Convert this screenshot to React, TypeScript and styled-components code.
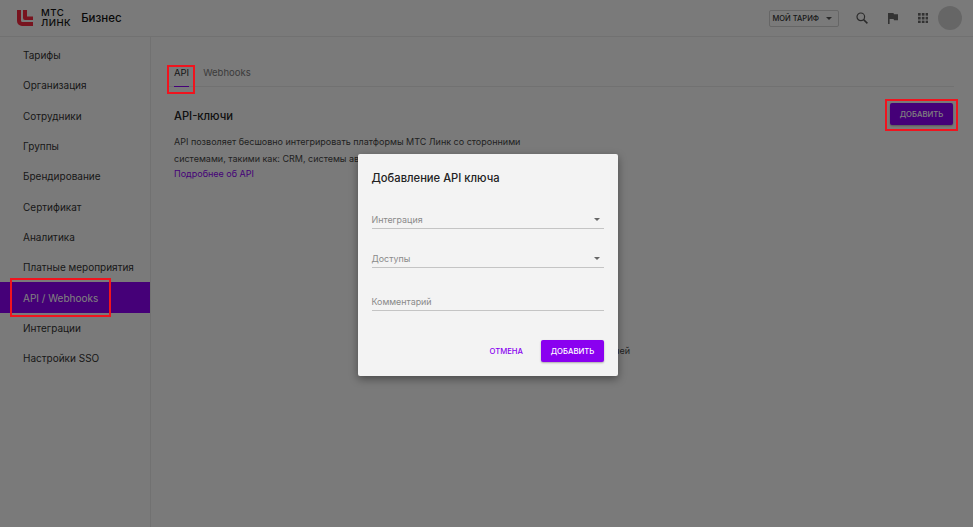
import React from "react";
import styled, { createGlobalStyle } from "styled-components";

const GlobalStyle = createGlobalStyle`
  html, body {
    margin: 0;
    padding: 0;
    background: #f5f5f5;
    font-family: Inter, "Noto Sans", sans-serif;
    color: #333;
  }
  * {
    box-sizing: border-box;
  }
`;

const Page = styled.div`
  position: relative;
  width: 973px;
  height: 527px;
  overflow: hidden;
  background: #f5f5f5;
`;

const Header = styled.header`
  height: 37px;
  display: flex;
  align-items: center;
  padding: 0 11px 0 17px;
  border-bottom: 1px solid #e2e2e2;
`;

const LogoText = styled.div`
  margin-left: 8px;
  font-size: 9.6px;
  line-height: 10px;
  letter-spacing: 0.5px;
  font-weight: 500;
  color: #111;
`;

const Brand = styled.div`
  margin-left: 10px;
  font-size: 11.5px;
  font-weight: 500;
  color: #111;
`;

const HeaderRight = styled.div`
  margin-left: auto;
  display: flex;
  align-items: center;
`;

const TariffButton = styled.div`
  width: 70px;
  height: 17px;
  display: flex;
  align-items: center;
  justify-content: space-between;
  padding: 0 6px 0 3px;
  border: 1px solid #ccc;
  border-radius: 2px;
  font-size: 7.5px;
  font-weight: 500;
  color: #333;
`;

const Caret = styled.span<{ $color?: string }>`
  width: 0;
  height: 0;
  border-left: 3px solid transparent;
  border-right: 3px solid transparent;
  border-top: 3px solid ${(p) => p.$color || "#555"};
`;

const IconSlot = styled.div<{ $left: number }>`
  margin-left: ${(p) => p.$left}px;
  display: flex;
  align-items: center;
`;

const Avatar = styled.div`
  width: 24px;
  height: 24px;
  margin-left: 10px;
  border-radius: 50%;
  background: #cdcdcd;
`;

const Body = styled.div`
  display: flex;
  height: 490px;
`;

const Sidebar = styled.nav`
  width: 151px;
  padding-top: 3px;
  border-right: 1px solid #e2e2e2;
`;

const NavItem = styled.div<{ $active?: boolean }>`
  height: 30.3px;
  display: flex;
  align-items: center;
  padding-left: 23px;
  font-size: 10px;
  color: ${(p) => (p.$active ? "#fff" : "#333")};
  background: ${(p) => (p.$active ? "#8a00f0" : "transparent")};
`;

const Content = styled.main`
  flex: 1;
  padding: 21px 19px 0 18px;
`;

const Tabs = styled.div`
  display: flex;
  gap: 14px;
  height: 29px;
  padding-left: 5px;
  border-bottom: 1px solid #e2e2e2;
`;

const Tab = styled.div<{ $active?: boolean }>`
  height: 29px;
  padding-top: 8px;
  font-size: 9.5px;
  line-height: 13px;
  color: ${(p) => (p.$active ? "#333" : "#777")};
  border-bottom: ${(p) => (p.$active ? "1px solid #8a00f0" : "none")};
`;

const TitleRow = styled.div`
  display: flex;
  align-items: center;
  justify-content: space-between;
  margin-top: 16px;
  padding-left: 5px;
  padding-right: 1px;
`;

const Title = styled.h2`
  margin: 0;
  padding-top: 4px;
  font-size: 11.2px;
  font-weight: 500;
  color: #222;
`;

const PrimaryButton = styled.button`
  width: 63px;
  height: 22px;
  padding: 0;
  border: none;
  border-radius: 2px;
  background: #8a00f0;
  color: #fff;
  font-family: inherit;
  font-size: 7.7px;
  font-weight: 500;
  box-shadow: 0 1px 2px rgba(0, 0, 0, 0.3);
`;

const Description = styled.p`
  margin: 9px 0 0 5px;
  width: 350px;
  font-size: 9px;
  line-height: 16.5px;
  color: #444;
`;

const MoreLink = styled.a`
  display: block;
  margin-left: 5px;
  font-size: 9px;
  line-height: 14px;
  color: #8a00f0;
`;

const EmptyText = styled.div`
  margin-top: 164px;
  text-align: right;
  padding-right: 324px;
  font-size: 9px;
  line-height: 12px;
  color: #444;
`;

const Overlay = styled.div`
  position: absolute;
  inset: 0;
  display: flex;
  align-items: center;
  justify-content: center;
  padding-left: 3px;
  padding-top: 3px;
  background: rgba(0, 0, 0, 0.5);
`;

const Dialog = styled.div`
  width: 260px;
  height: 222px;
  padding: 17px 14px 14px 13.5px;
  display: flex;
  flex-direction: column;
  border-radius: 2px;
  background: #f3f3f3;
  box-shadow: 0 3px 8px rgba(0, 0, 0, 0.4);
`;

const DialogTitle = styled.h3`
  margin: 0;
  font-size: 11.2px;
  line-height: 15px;
  font-weight: 500;
  color: #222;
`;

const Field = styled.div<{ $top: number }>`
  margin-top: ${(p) => p.$top}px;
  height: 18px;
  display: flex;
  align-items: center;
  justify-content: space-between;
  padding: 0 4px 1px 0;
  border-bottom: 1.5px solid #c4c4c4;
  font-size: 8.9px;
  color: #8a8a8a;
`;

const DialogActions = styled.div`
  margin-top: auto;
  display: flex;
  align-items: center;
  justify-content: flex-end;
  gap: 18px;
`;

const CancelButton = styled.span`
  font-size: 7.7px;
  font-weight: 500;
  color: #8a00f0;
`;

const Mark = styled.div`
  position: absolute;
  border: 2px solid #f0141e;
`;

const navItems = [
  "Тарифы",
  "Организация",
  "Сотрудники",
  "Группы",
  "Брендирование",
  "Сертификат",
  "Аналитика",
  "Платные мероприятия",
  "API / Webhooks",
  "Интеграции",
  "Настройки SSO",
];

const marks = [
  { left: 167, top: 65, width: 28, height: 29 },
  { left: 885, top: 99, width: 73, height: 32 },
  { left: 10, top: 278, width: 101, height: 39 },
];

const Logo = () => (
  <svg width="16" height="16" viewBox="0 0 16 16" fill="#f0283f">
    <path d="M0 0h4v10.5a1.5 1.5 0 0 0 1.5 1.5H16v4H5a5 5 0 0 1-5-5z" />
    <path d="M6 0h4v6.5H16v3.5H8a2 2 0 0 1-2-2z" />
  </svg>
);

export default function App() {
  return (
    <Page>
      <GlobalStyle />
      <Header>
        <Logo />
        <LogoText>
          МТС
          <br />
          ЛИНК
        </LogoText>
        <Brand>Бизнес</Brand>
        <HeaderRight>
          <TariffButton>
            МОЙ ТАРИФ
            <Caret />
          </TariffButton>
          <IconSlot $left={17}>
            <svg width="12" height="12" viewBox="0 0 12 12" fill="none" stroke="#555" strokeWidth="1.2">
              <circle cx="4.8" cy="4.8" r="3.8" />
              <path d="M7.6 7.6L11.4 11.4" strokeWidth="1.5" />
            </svg>
          </IconSlot>
          <IconSlot $left={20}>
            <svg width="10" height="11" viewBox="0 0 10 11" fill="#666">
              <path d="M0 0h5.5l.4 1.2H10v6H6l-.4-1.2H1.6V11H0z" />
            </svg>
          </IconSlot>
          <IconSlot $left={20}>
            <svg width="10.5" height="10.5" viewBox="0 0 11 11" fill="#666">
              {[0, 4, 8].flatMap((y) =>
                [0, 4, 8].map((x) => <rect key={`${x}-${y}`} x={x} y={y} width="2.8" height="2.8" />)
              )}
            </svg>
          </IconSlot>
          <Avatar />
        </HeaderRight>
      </Header>
      <Body>
        <Sidebar>
          {navItems.map((item) => (
            <NavItem key={item} $active={item === "API / Webhooks"}>
              {item}
            </NavItem>
          ))}
        </Sidebar>
        <Content>
          <Tabs>
            <Tab $active>API</Tab>
            <Tab>Webhooks</Tab>
          </Tabs>
          <TitleRow>
            <Title>API-ключи</Title>
            <PrimaryButton>ДОБАВИТЬ</PrimaryButton>
          </TitleRow>
          <Description>
            API позволяет бесшовно интегрировать платформы МТС Линк со сторонними системами, такими как: CRM, системы
            автоматизации
          </Description>
          <MoreLink>Подробнее об API</MoreLink>
          <EmptyText>У вас пока нет созданных API-ключей</EmptyText>
        </Content>
      </Body>
      <Overlay>
        <Dialog>
          <DialogTitle>Добавление API ключа</DialogTitle>
          <Field $top={25}>
            Интеграция
            <Caret $color="#666" />
          </Field>
          <Field $top={21}>
            Доступы
            <Caret $color="#666" />
          </Field>
          <Field $top={25}>Комментарий</Field>
          <DialogActions>
            <CancelButton>ОТМЕНА</CancelButton>
            <PrimaryButton>ДОБАВИТЬ</PrimaryButton>
          </DialogActions>
        </Dialog>
      </Overlay>
      {marks.map((m) => (
        <Mark key={m.left} style={m} />
      ))}
    </Page>
  );
}
